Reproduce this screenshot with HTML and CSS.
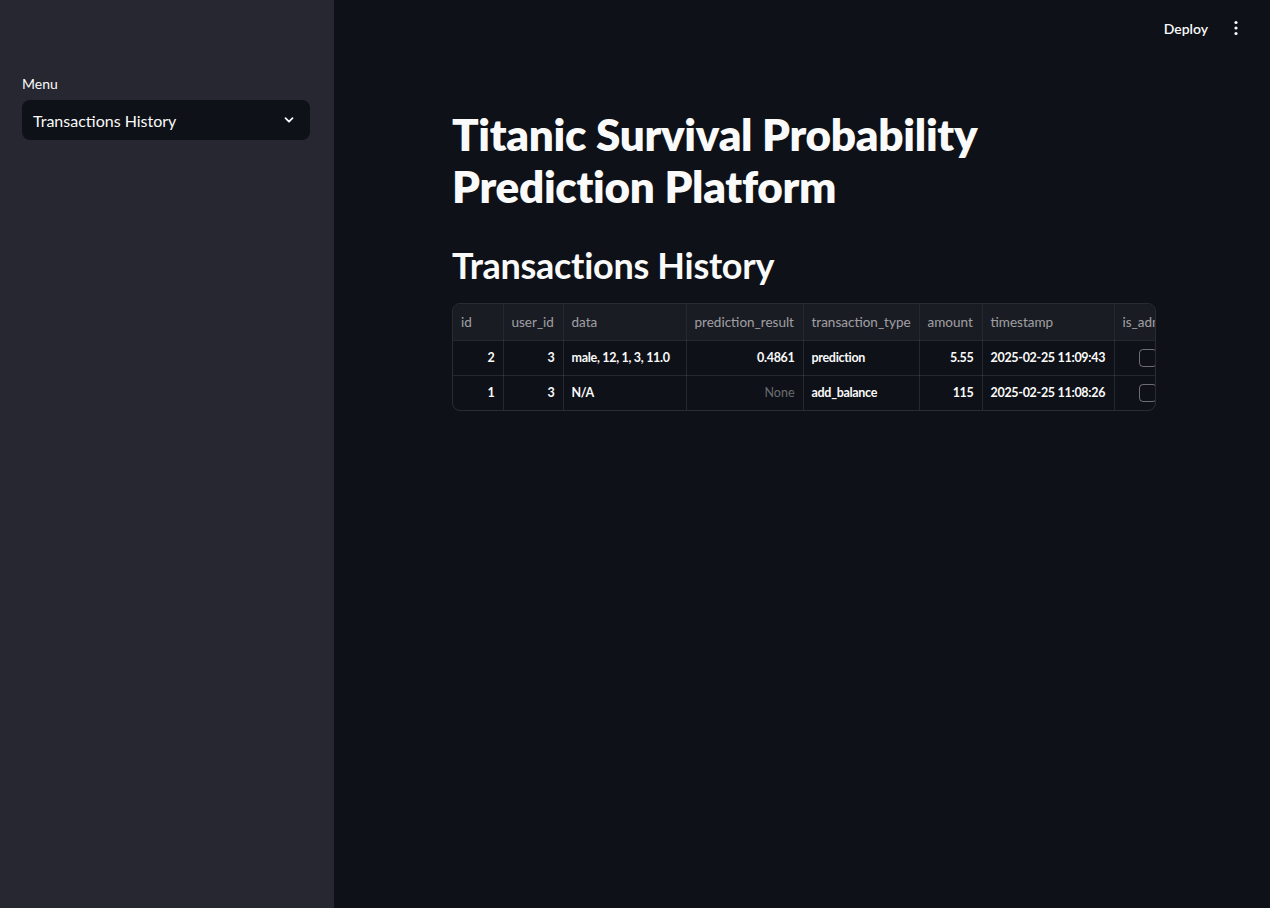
FILE: index.html
```html
<!DOCTYPE html>
<html>
<head>
<meta charset="utf-8">
<link rel="stylesheet" href="styles.css">
</head>
<body>
<div class="app">
  <aside class="sidebar">
    <div class="field">
      <label class="label">Menu</label>
      <div class="select">
        <span>Transactions History</span>
        <svg class="chev" width="16" height="16" viewBox="0 0 16 16"><path d="M4.5 6.2 8 9.7l3.5-3.5" fill="none" stroke="#fafafa" stroke-width="1.8" stroke-linecap="round" stroke-linejoin="round"/></svg>
      </div>
    </div>
  </aside>
  <main class="main">
    <header class="topbar">
      <span class="deploy">Deploy</span>
      <svg class="kebab" width="16" height="16" viewBox="0 0 16 16"><circle cx="8" cy="2.5" r="1.6" fill="#fafafa"/><circle cx="8" cy="8" r="1.6" fill="#fafafa"/><circle cx="8" cy="13.5" r="1.6" fill="#fafafa"/></svg>
    </header>
    <div class="block">
      <h1 class="title">Titanic Survival Probability Prediction Platform</h1>
      <h2 class="subtitle">Transactions History</h2>
      <div class="grid-wrap">
        <table class="grid">
          <colgroup>
            <col style="width:50px"><col style="width:60px"><col style="width:123px"><col style="width:117px"><col style="width:116px"><col style="width:63px"><col style="width:132px"><col style="width:90px">
          </colgroup>
          <thead>
            <tr><th>id</th><th>user_id</th><th>data</th><th>prediction_result</th><th>transaction_type</th><th>amount</th><th>timestamp</th><th>is_admin</th></tr>
          </thead>
          <tbody>
            <tr><td class="num">2</td><td class="num">3</td><td>male, 12, 1, 3, 11.0</td><td class="num">0.4861</td><td>prediction</td><td class="num">5.55</td><td>2025-02-25 11:09:43</td><td class="chk"><span class="box"></span></td></tr>
            <tr><td class="num">1</td><td class="num">3</td><td>N/A</td><td class="num none">None</td><td>add_balance</td><td class="num">115</td><td>2025-02-25 11:08:26</td><td class="chk"><span class="box"></span></td></tr>
          </tbody>
        </table>
      </div>
    </div>
  </main>
</div>
</body>
</html>
```

FILE: styles.css
```css
* { box-sizing: border-box; }
html, body { margin: 0; padding: 0; height: 100%; }
body {
  background: #0e1117;
  color: #fafafa;
  font-family: "Lato", "Liberation Sans", sans-serif;
}
.app { display: flex; height: 908px; }
.sidebar {
  width: 334px;
  flex: none;
  background: #262730;
  padding: 76px 24px 0 22px;
}
.field { display: flex; flex-direction: column; }
.label {
  font-size: 14px;
  line-height: 16px;
  margin-bottom: 8px;
  color: #fafafa;
}
.select {
  height: 40px;
  background: #0e1117;
  border-radius: 8px;
  display: flex;
  align-items: center;
  justify-content: space-between;
  padding: 0 13px 0 11px;
  font-size: 16px;
}
.chev { display: block; }
.main { flex: 1; position: relative; min-width: 0; }
.topbar {
  height: 56px;
  display: flex;
  align-items: center;
  justify-content: flex-end;
  padding: 0 26px 0 0;
  gap: 20px;
}
.deploy { font-size: 14px; font-weight: 600; }
.kebab { display: block; }
.block {
  width: 704px;
  margin: 0 0 0 118px;
  padding-top: 52px;
}
.title {
  margin: 0;
  font-size: 44px;
  font-weight: 800;
  line-height: 52px;
  letter-spacing: -0.3px;
}
.subtitle {
  margin: 31px 0 0;
  font-size: 36px;
  font-weight: 700;
  line-height: 44px;
  letter-spacing: -0.3px;
}
.grid-wrap {
  margin-top: 16px;
  border: 1px solid rgba(250,250,250,0.12);
  border-radius: 8px;
  overflow: hidden;
  width: 704px;
}
.grid {
  border-collapse: collapse;
  table-layout: fixed;
  width: 751px;
  font-size: 12.5px;
}
.grid th, .grid td {
  height: 35px;
  padding: 0 8px;
  border-right: 1px solid rgba(250,250,250,0.1);
  border-bottom: 1px solid rgba(250,250,250,0.1);
  white-space: nowrap;
  overflow: hidden;
  text-align: left;
}
.grid tbody tr:last-child td { border-bottom: none; }
.grid th {
  height: 36px;
  background: #1a1c24;
  color: rgba(250,250,250,0.6);
  font-weight: 400;
  font-size: 13.5px;
}
.grid td { font-weight: 700; color: #fafafa; letter-spacing: -0.3px; }
.grid td.num { text-align: right; }
.grid td.none { color: rgba(250,250,250,0.4); font-weight: 400; letter-spacing: 0; }
.grid td.chk { padding-left: 24px; }
.box {
  display: block;
  width: 18px;
  height: 18px;
  border: 1px solid rgba(250,250,250,0.4);
  border-radius: 4px;
}
```
